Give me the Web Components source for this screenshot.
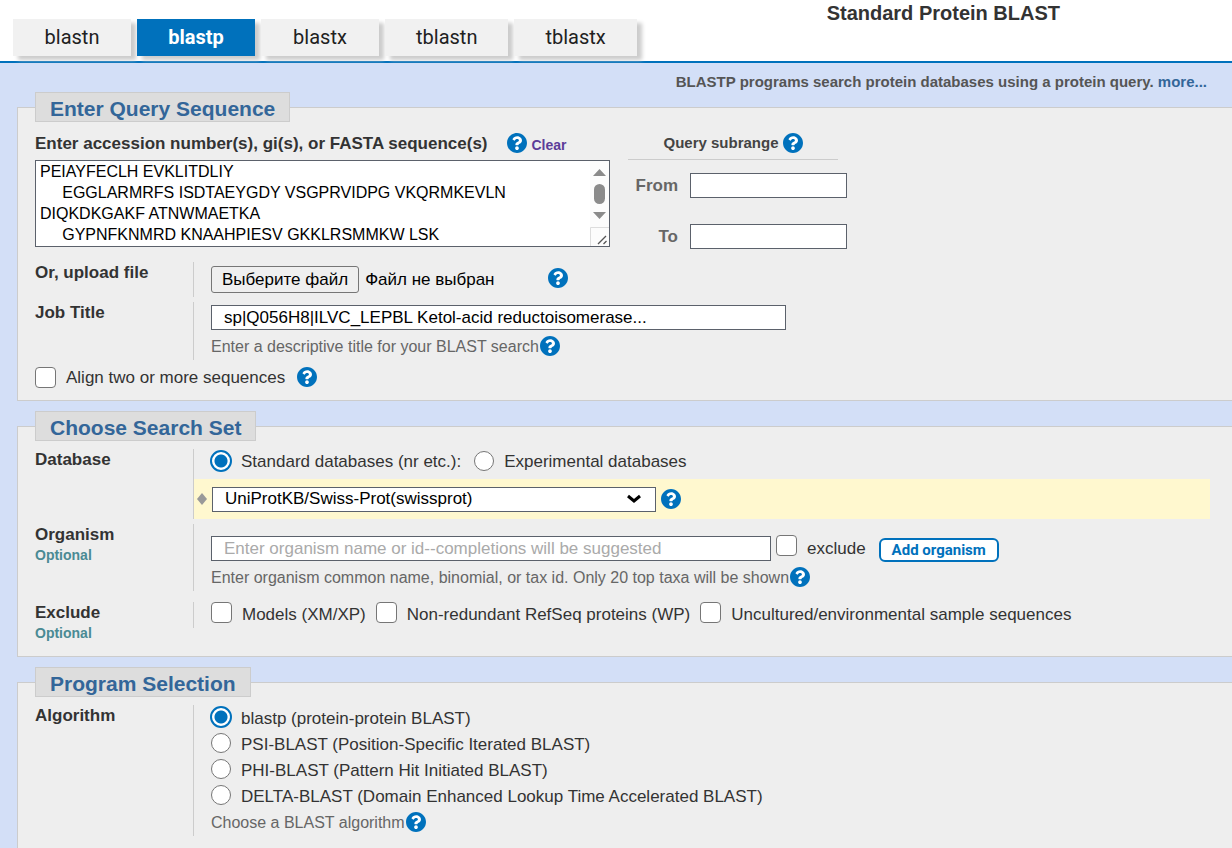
<!DOCTYPE html>
<html lang="en">
<head>
<meta charset="utf-8">
<title>Standard Protein BLAST</title>
<style>
  body { margin: 0; background: #d3dff7; color: #333; font: 17px/22px "Liberation Sans", Arial, sans-serif; }
</style>
</head>
<body>
<blast-page></blast-page>

<script>
const controls = `
  * { box-sizing: border-box; }
  label { cursor: pointer; }
  a { text-decoration: none; }
  .field {
    height: 25px; margin: 0; padding: 0 12px; border: 1px solid #5b616b; border-radius: 0;
    background: #fff; color: #000; font: inherit; outline: 0;
  }
  .field::placeholder { color: #aaa; opacity: 1; }
  .box, .dot { appearance: none; flex: none; margin: 0; background: #fff; border: 1px solid #767676; }
  .box { width: 21px; height: 21px; border-radius: 4px; }
  .dot { width: 20px; height: 20px; border-radius: 50%; }
  .dot:checked {
    width: 22px; height: 22px; margin: -1px; border: 2px solid #0071bc;
    background: radial-gradient(circle, #0071bc 0 6px, #fff 7px);
  }
  .hint { display: flex; align-items: center; gap: 1px; color: #666; font-size: 16px; }
  .hint span { padding-top: 2px; }
`;

function define(name, css, html, setup) {
  const template = document.createElement('template');
  template.innerHTML = `<style>${controls}${css}</style>${html}`;
  customElements.define(name, class extends HTMLElement {
    constructor() {
      super();
      this.attachShadow({ mode: 'open' }).append(template.content.cloneNode(true));
    }
    connectedCallback() { if (setup) setup(this, this.shadowRoot); }
  });
}

define('help-icon', `
  :host { display: inline-flex; flex: none; width: 20px; height: 20px; }
  a { display: flex; width: 100%; }
  svg { width: 100%; height: 100%; }
`, `
  <a href="#help" aria-label="Help"><svg viewBox="8 8 496 496">
    <circle cx="256" cy="256" r="240" fill="#fff"/>
    <path fill="#0071bc" d="M504 256c0 136.997-111.043 248-248 248S8 392.997 8 256C8 119.083 119.043 8 256 8s248 111.083 248 248zM262.655 90c-54.497 0-89.255 22.957-116.549 63.758-3.536 5.286-2.353 12.415 2.715 16.258l34.699 26.31c5.205 3.947 12.621 3.008 16.665-2.122 17.864-22.658 30.113-35.797 57.303-35.797 20.429 0 45.698 13.148 45.698 32.958 0 14.976-12.363 22.667-32.534 33.976C247.128 238.528 216 254.941 216 296v4c0 6.627 5.373 12 12 12h56c6.627 0 12-5.373 12-12v-1.333c0-28.462 83.186-29.647 83.186-106.667 0-58.002-60.165-102-116.531-102zM256 338c-25.365 0-46 20.635-46 46 0 25.364 20.635 46 46 46s46-20.636 46-46c0-25.364-20.635-46-46-46z"/>
  </svg></a>
`);

define('blast-tabs', `
  :host { display: block; }
  nav { display: flex; gap: 6px; }
  a {
    min-width: 118px; height: 37px; padding: 0 31px; background: #f1f1f1; color: #212121; text-align: center;
    font: 20px/36px Roboto, sans-serif; box-shadow: 5px 4px 4px #ccc;
  }
  a[aria-current] { background: #0071bc; color: #fff; font-weight: 700; }
`, `
  <nav aria-label="BLAST programs">
    <a href="#blastn">blastn</a>
    <a href="#blastp" aria-current="page">blastp</a>
    <a href="#blastx">blastx</a>
    <a href="#tblastn">tblastn</a>
    <a href="#tblastx">tblastx</a>
  </nav>
`);

define('form-panel', `
  :host { display: block; }
  fieldset {
    min-width: 0; height: 100%; margin: 0; padding: 8px 22px var(--panel-end, 28px) 17px;
    border: 1px solid #ccc; border-right: 0; background: #eee;
  }
  :host([open-ended]) fieldset { border-bottom: 0; }
  legend {
    height: 30px; padding: 0 14px; border: 1px solid #ccc; background: #ddd;
    color: #369; font-size: 21px; line-height: 32px; font-weight: 700;
  }
`, `
  <fieldset><legend><slot name="title"></slot></legend><slot></slot></fieldset>
`);

define('form-row', `
  :host { display: grid; grid-template-columns: 158px minmax(0, 1fr); align-items: start; }
  .name { line-height: 22px; font-weight: 700; }
  .body { padding: var(--body-top, 0) 0 0 17px; border-left: 1px solid #ccc; }
  ::slotted([slot="note"]) { display: block; color: #4a8a94; font-size: 14px; line-height: 18px; }
`, `
  <div class="name"><slot name="name"></slot><slot name="note"></slot></div>
  <div class="body"><slot></slot></div>
`);

define('sequence-box', `
  :host { display: block; }
  .frame { display: flex; height: 87px; border: 1px solid #5b616b; background: #fff; }
  textarea {
    flex: 1; min-width: 0; margin: 0; padding: 0 4px; border: 0; outline: 0; resize: none; overflow: hidden;
    background: none; color: #000; font: 16px/21px "Liberation Sans", Arial, sans-serif; white-space: pre;
  }
  svg { flex: none; width: 19px; height: 85px; }
`, `
  <div class="frame">
    <textarea aria-label="Enter accession number(s), gi(s), or FASTA sequence(s)" spellcheck="false">PEIAYFECLH EVKLITDLIY
     EGGLARMRFS ISDTAEYGDY VSGPRVIDPG VKQRMKEVLN
DIQKDKGAKF ATNWMAETKA
     GYPNFKNMRD KNAAHPIESV GKKLRSMMKW LSK</textarea>
    <svg viewBox="0 0 19 85" aria-hidden="true">
      <path fill="#fcfcfc" d="M0 0h19v85H0z"/>
      <path fill="#8b8b8b" d="M3 15l6.500-7 6.500 7zM3 51l6.500 7 6.500-7z"/>
      <rect x="4" y="23" width="11" height="20" rx="5.500" fill="#8b8b8b"/>
      <path fill="none" stroke="#ddd" d="M.5 85V66.500H19"/>
      <path fill="none" stroke="#555" stroke-width="1.300" d="M8 83l8-8M13.500 83l3-3"/>
    </svg>
  </div>
`);

define('query-panel', `
  :host { display: block; }
  form-panel { --panel-end: 11px; }
  .query { display: flex; gap: 18px; margin-bottom: 13px; }
  .sequence { flex: 0 1 575px; }
  .caption { display: flex; align-items: center; gap: 5px; height: 26px; margin-bottom: 4px; font-weight: 700; }
  .caption span { padding: 2px 14px 0 0; }
  .caption a { padding-top: 4px; color: #5c3d99; font-size: 14px; }
  .range { display: grid; grid-template-columns: 50px 157px; column-gap: 12px; row-gap: 26px; align-items: center; }
  .range label { color: #666; font-weight: 700; text-align: right; }
  .range .field { width: 157px; }
  .range-title {
    display: flex; justify-content: center; align-items: center; gap: 4px; width: 210px; height: 30px;
    margin-bottom: 13px; padding-bottom: 4px; border-bottom: 1px solid #ccc; color: #444; font-size: 15px; font-weight: 700;
  }
  .file { display: flex; align-items: center; height: 35px; color: #000; }
  .file button {
    height: 27px; margin-right: 6px; padding: 0 10px; border: 1px solid #767676; border-radius: 3px;
    background: #efefef; color: #000; font: inherit; line-height: 24px;
  }
  .file help-icon { margin-bottom: 4px; }
  .pick { display: flex; align-items: center; width: 337px; }
  .job { width: 100%; max-width: 575px; }
  .title-row { --body-top: 3px; margin: 5px 0; }
  .title-row .hint { height: 30px; padding-top: 2px; }
  .align { display: flex; align-items: center; height: 24px; }
  .align label { padding: 2px 12px 0 10px; }
`, `
  <form-panel>
    <span slot="title">Enter Query Sequence</span>
    <div class="query">
      <div class="sequence">
        <div class="caption"><span>Enter accession number(s), gi(s), or FASTA sequence(s)</span><help-icon></help-icon><a href="#clear">Clear</a></div>
        <sequence-box></sequence-box>
      </div>
      <div>
        <div class="range-title"><span>Query subrange</span><help-icon></help-icon></div>
        <div class="range">
          <label for="from">From</label><input class="field" id="from" type="text">
          <label for="to">To</label><input class="field" id="to" type="text">
        </div>
      </div>
    </div>
    <form-row>
      <label slot="name" for="file">Or, upload file</label>
      <div class="file">
        <div class="pick"><button type="button">Выберите файл</button><span>Файл не выбран</span></div>
        <input id="file" type="file" hidden>
        <help-icon></help-icon>
      </div>
    </form-row>
    <form-row class="title-row">
      <label slot="name" for="job">Job Title</label>
      <input class="field job" id="job" type="text" value="sp|Q056H8|ILVC_LEPBL Ketol-acid reductoisomerase...">
      <div class="hint"><span>Enter a descriptive title for your BLAST search</span><help-icon></help-icon></div>
    </form-row>
    <div class="align"><input class="box" id="align" type="checkbox"><label for="align">Align two or more sequences</label><help-icon></help-icon></div>
  </form-panel>
`, (host, root) => {
  const file = root.getElementById('file');
  const status = root.querySelector('.pick span');
  root.querySelector('.pick button').onclick = () => file.click();
  file.onchange = () => { if (file.files[0]) status.textContent = file.files[0].name; };
});

define('search-set-panel', `
  :host { display: block; }
  form-panel { --panel-end: 14px; }
  .choices { display: flex; align-items: center; gap: 10px; height: 24px; margin-bottom: 6px; }
  .choices label { padding: 2px 4px 0 0; }
  .choices label + input { margin-left: -1px; }
  .database {
    display: flex; align-items: center; gap: 4px; height: 40px; margin-left: -17px; padding-left: 3px; background: #fff8cf;
  }
  .database svg { flex: none; width: 10px; height: 12px; }
  select.field {
    flex: 0 1 444px; min-width: 0; appearance: none; margin-left: 1px;
    background: #fff url("data:image/svg+xml,%3Csvg xmlns='http://www.w3.org/2000/svg' width='14' height='10'%3E%3Cpath d='M1 2l6 5 6-5' fill='none' stroke='%23000' stroke-width='3'/%3E%3C/svg%3E") no-repeat right 14px center;
  }
  .database help-icon { margin-left: 1px; }
  .organism { --body-top: 12px; margin: 5px 0 11px; }
  .line { display: flex; align-items: center; height: 25px; }
  .line .field { flex: 0 1 560px; min-width: 0; }
  .line .box { margin: 0 10px 6px 5px; }
  .line button {
    height: 24px; margin: 2px 0 0 13px; padding: 0 11px; border: 2px solid #0071bc; border-radius: 6px;
    background: #fff; color: #0071bc; font: 700 15px/18px Roboto, sans-serif;
  }
  .organism .hint { height: 30px; padding-top: 2px; }
  .checks { display: flex; align-items: center; flex-wrap: wrap; height: 26px; }
  .checks .box { margin: 0 10px 5px 0; }
  .checks label { margin-right: 10px; }
`, `
  <form-panel>
    <span slot="title">Choose Search Set</span>
    <form-row>
      <span slot="name">Database</span>
      <div class="choices">
        <input class="dot" id="standard" name="db" type="radio" checked><label for="standard">Standard databases (nr etc.):</label>
        <input class="dot" id="experimental" name="db" type="radio"><label for="experimental">Experimental databases</label>
      </div>
      <div class="database">
        <svg viewBox="0 0 10 12" aria-hidden="true"><path fill="#999" d="M5 0l5 6-5 6-5-6z"/></svg>
        <select class="field" aria-label="Database"><option>UniProtKB/Swiss-Prot(swissprot)</option></select>
        <help-icon></help-icon>
      </div>
    </form-row>
    <form-row class="organism">
      <label slot="name" for="organism">Organism</label><span slot="note">Optional</span>
      <div class="line">
        <input class="field" id="organism" type="text" placeholder="Enter organism name or id--completions will be suggested">
        <input class="box" id="exclude" type="checkbox"><label for="exclude">exclude</label>
        <button type="button">Add organism</button>
      </div>
      <div class="hint"><span>Enter organism common name, binomial, or tax id. Only 20 top taxa will be shown</span><help-icon></help-icon></div>
    </form-row>
    <form-row>
      <span slot="name">Exclude</span><span slot="note">Optional</span>
      <div class="checks">
        <input class="box" id="models" type="checkbox"><label for="models">Models (XM/XP)</label>
        <input class="box" id="refseq" type="checkbox"><label for="refseq">Non-redundant RefSeq proteins (WP)</label>
        <input class="box" id="samples" type="checkbox"><label for="samples">Uncultured/environmental sample sequences</label>
      </div>
    </form-row>
  </form-panel>
`);

define('program-panel', `
  :host { display: grid; }
  form-panel { --panel-end: 12px; }
  .option { display: flex; align-items: center; gap: 10px; height: 26px; padding-bottom: 2px; }
  .option label { padding-top: 3px; }
  .hint { height: 27px; padding-bottom: 2px; }
`, `
  <form-panel open-ended>
    <span slot="title">Program Selection</span>
    <form-row>
      <span slot="name">Algorithm</span>
      <div class="option"><input class="dot" id="blastp" name="algorithm" type="radio" checked><label for="blastp">blastp (protein-protein BLAST)</label></div>
      <div class="option"><input class="dot" id="psi" name="algorithm" type="radio"><label for="psi">PSI-BLAST (Position-Specific Iterated BLAST)</label></div>
      <div class="option"><input class="dot" id="phi" name="algorithm" type="radio"><label for="phi">PHI-BLAST (Pattern Hit Initiated BLAST)</label></div>
      <div class="option"><input class="dot" id="delta" name="algorithm" type="radio"><label for="delta">DELTA-BLAST (Domain Enhanced Lookup Time Accelerated BLAST)</label></div>
      <div class="hint"><span>Choose a BLAST algorithm</span><help-icon></help-icon></div>
    </form-row>
  </form-panel>
`);

define('blast-page', `
  :host { display: flex; flex-direction: column; min-height: 100vh; }
  header {
    display: flex; justify-content: space-between; padding: 19px 172px 5px 13px; height: 63px;
    background: #fff; border-bottom: 2px solid #0071bc;
  }
  h1 { margin: -17px 0 0; font-size: 20px; line-height: 22px; }
  .intro { margin: 0; padding: 10px 25px 1px; color: #555; font-size: 15px; line-height: 18px; font-weight: 700; text-align: right; }
  .intro a { color: #369; }
  main { flex: 1; display: flex; flex-direction: column; gap: 10px; padding-left: 17px; }
  program-panel { flex: 1; }
`, `
  <header><blast-tabs></blast-tabs><h1>Standard Protein BLAST</h1></header>
  <p class="intro">BLASTP programs search protein databases using a protein query. <a href="#more">more...</a></p>
  <main>
    <query-panel></query-panel>
    <search-set-panel></search-set-panel>
    <program-panel></program-panel>
  </main>
`);
</script>
</body>
</html>
